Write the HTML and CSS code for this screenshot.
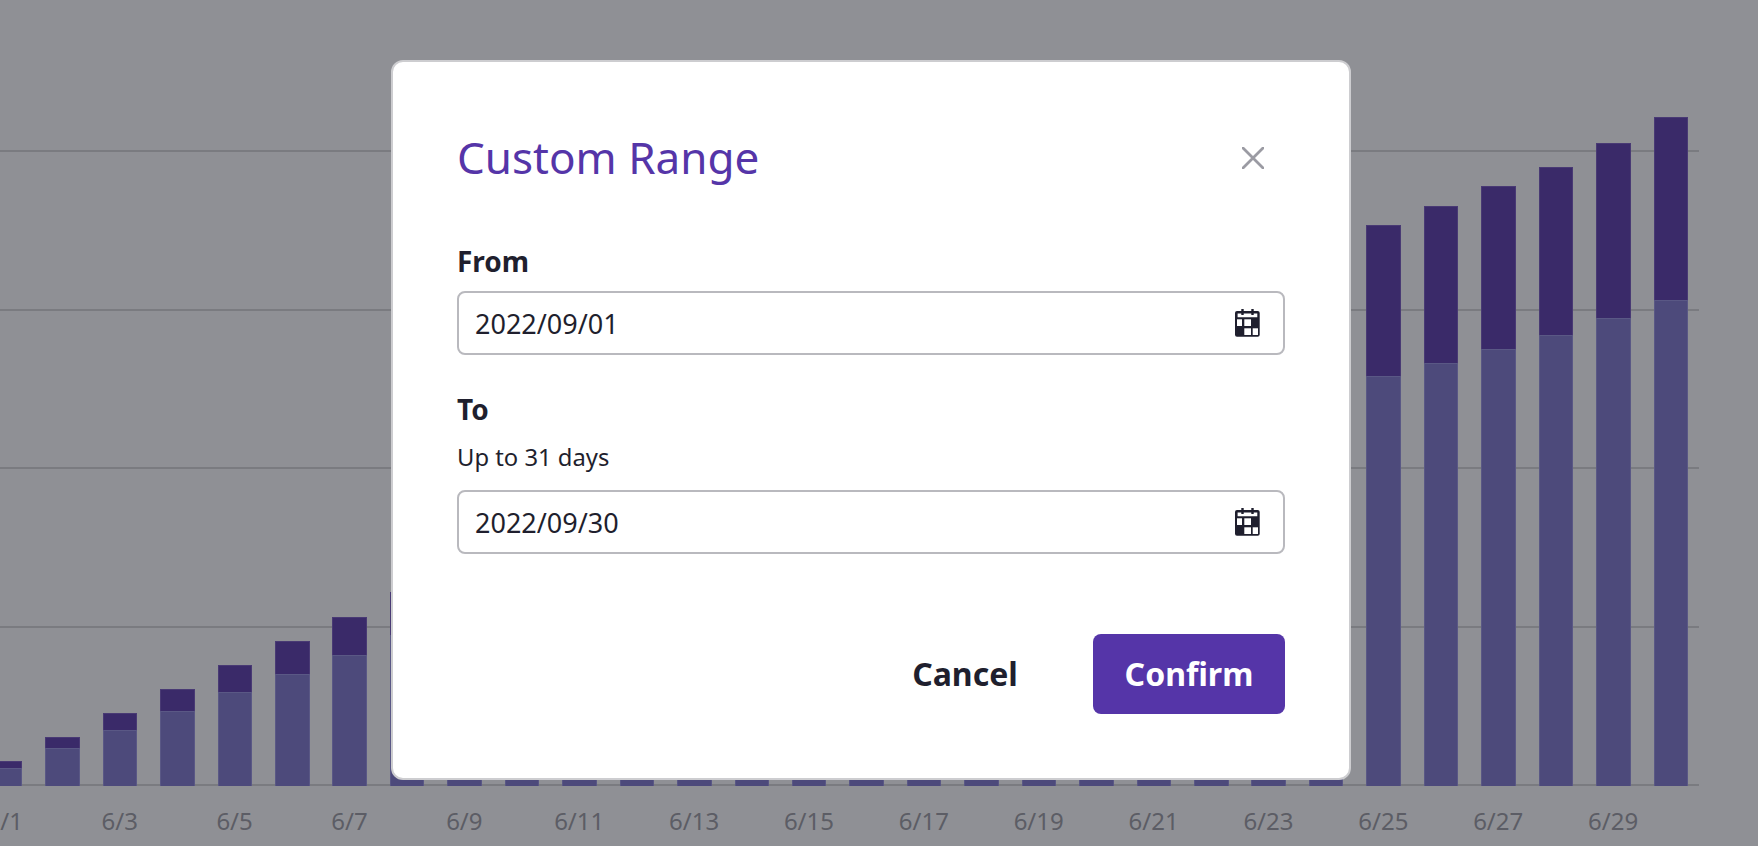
FILE: index.html
```html
<!DOCTYPE html>
<html>
<head>
    <title>Custom Range</title>
    <link rel="stylesheet" href="styles.css">
</head>
<body>
    <div class="chart">
        <div class="plot">
            <div class="grid">
                <div class="grid_line"></div>
                <div class="grid_line"></div>
                <div class="grid_line"></div>
                <div class="grid_line"></div>
                <div class="grid_line"></div>
            </div>
            <div class="bars">
                <div class="bar"><div class="bar_top" style="height:7px"></div><div class="bar_low" style="height:18px"></div></div>
                <div class="bar"><div class="bar_top" style="height:11px"></div><div class="bar_low" style="height:38px"></div></div>
                <div class="bar"><div class="bar_top" style="height:17px"></div><div class="bar_low" style="height:56px"></div></div>
                <div class="bar"><div class="bar_top" style="height:22px"></div><div class="bar_low" style="height:75px"></div></div>
                <div class="bar"><div class="bar_top" style="height:27px"></div><div class="bar_low" style="height:94px"></div></div>
                <div class="bar"><div class="bar_top" style="height:33px"></div><div class="bar_low" style="height:112px"></div></div>
                <div class="bar"><div class="bar_top" style="height:38px"></div><div class="bar_low" style="height:131px"></div></div>
                <div class="bar"><div class="bar_top" style="height:43px"></div><div class="bar_low" style="height:151px"></div></div>
                <div class="bar"><div class="bar_top" style="height:50px"></div><div class="bar_low" style="height:166px"></div></div>
                <div class="bar"><div class="bar_top" style="height:56px"></div><div class="bar_low" style="height:181px"></div></div>
                <div class="bar"><div class="bar_top" style="height:63px"></div><div class="bar_low" style="height:196px"></div></div>
                <div class="bar"><div class="bar_top" style="height:69px"></div><div class="bar_low" style="height:211px"></div></div>
                <div class="bar"><div class="bar_top" style="height:76px"></div><div class="bar_low" style="height:226px"></div></div>
                <div class="bar"><div class="bar_top" style="height:82px"></div><div class="bar_low" style="height:242px"></div></div>
                <div class="bar"><div class="bar_top" style="height:89px"></div><div class="bar_low" style="height:257px"></div></div>
                <div class="bar"><div class="bar_top" style="height:95px"></div><div class="bar_low" style="height:272px"></div></div>
                <div class="bar"><div class="bar_top" style="height:102px"></div><div class="bar_low" style="height:287px"></div></div>
                <div class="bar"><div class="bar_top" style="height:108px"></div><div class="bar_low" style="height:303px"></div></div>
                <div class="bar"><div class="bar_top" style="height:115px"></div><div class="bar_low" style="height:318px"></div></div>
                <div class="bar"><div class="bar_top" style="height:121px"></div><div class="bar_low" style="height:333px"></div></div>
                <div class="bar"><div class="bar_top" style="height:128px"></div><div class="bar_low" style="height:348px"></div></div>
                <div class="bar"><div class="bar_top" style="height:134px"></div><div class="bar_low" style="height:364px"></div></div>
                <div class="bar"><div class="bar_top" style="height:141px"></div><div class="bar_low" style="height:379px"></div></div>
                <div class="bar"><div class="bar_top" style="height:145px"></div><div class="bar_low" style="height:394px"></div></div>
                <div class="bar"><div class="bar_top" style="height:151px"></div><div class="bar_low" style="height:410px"></div></div>
                <div class="bar"><div class="bar_top" style="height:157px"></div><div class="bar_low" style="height:423px"></div></div>
                <div class="bar"><div class="bar_top" style="height:163px"></div><div class="bar_low" style="height:437px"></div></div>
                <div class="bar"><div class="bar_top" style="height:168px"></div><div class="bar_low" style="height:451px"></div></div>
                <div class="bar"><div class="bar_top" style="height:175px"></div><div class="bar_low" style="height:468px"></div></div>
                <div class="bar"><div class="bar_top" style="height:183px"></div><div class="bar_low" style="height:486px"></div></div>
            </div>
        </div>
        <div class="labels">
            <span class="label">6/1</span>
            <span class="label">6/3</span>
            <span class="label">6/5</span>
            <span class="label">6/7</span>
            <span class="label">6/9</span>
            <span class="label">6/11</span>
            <span class="label">6/13</span>
            <span class="label">6/15</span>
            <span class="label">6/17</span>
            <span class="label">6/19</span>
            <span class="label">6/21</span>
            <span class="label">6/23</span>
            <span class="label">6/25</span>
            <span class="label">6/27</span>
            <span class="label">6/29</span>
        </div>
    </div>

    <div class="modal">
        <div class="modal_header">
            <h2 class="modal_title">Custom Range</h2>
            <svg class="close_icon" width="22" height="22" viewBox="0 0 22 22">
                <path d="M1 1L21 21M21 1L1 21" fill="none" stroke="#9b9ba3" stroke-width="2.8" stroke-linecap="round"/>
            </svg>
        </div>

        <div class="field field_from">
            <label class="field_label" for="input_from">From</label>
            <div class="date_box">
                <input id="input_from" class="date_input" type="text" value="2022/09/01">
                <svg class="calendar_icon" width="25" height="28" viewBox="0 0 25 28">
                    <rect x="0" y="2" width="24.7" height="25.8" rx="2" fill="#1f1f2e"/>
                    <rect x="6.3" y="0" width="2.4" height="5" fill="#1f1f2e"/>
                    <rect x="16.3" y="0" width="2.4" height="5" fill="#1f1f2e"/>
                    <path d="M2.6 4.5H6.3V6H8.7V4.5H16.3V6H18.7V4.5H22.3V8.3H2.6Z" fill="#fff"/>
                    <rect x="2" y="10.3" width="5" height="6.7" fill="#fff"/>
                    <rect x="9.3" y="10.3" width="6.7" height="6.7" fill="#fff"/>
                    <rect x="9.3" y="19.3" width="6.7" height="6.7" fill="#fff"/>
                    <rect x="17.7" y="19.3" width="5.3" height="6.7" fill="#fff"/>
                </svg>
            </div>
        </div>

        <div class="field field_to">
            <label class="field_label" for="input_to">To</label>
            <div class="field_hint">Up to 31 days</div>
            <div class="date_box">
                <input id="input_to" class="date_input" type="text" value="2022/09/30">
                <svg class="calendar_icon" width="25" height="28" viewBox="0 0 25 28">
                    <rect x="0" y="2" width="24.7" height="25.8" rx="2" fill="#1f1f2e"/>
                    <rect x="6.3" y="0" width="2.4" height="5" fill="#1f1f2e"/>
                    <rect x="16.3" y="0" width="2.4" height="5" fill="#1f1f2e"/>
                    <path d="M2.6 4.5H6.3V6H8.7V4.5H16.3V6H18.7V4.5H22.3V8.3H2.6Z" fill="#fff"/>
                    <rect x="2" y="10.3" width="5" height="6.7" fill="#fff"/>
                    <rect x="9.3" y="10.3" width="6.7" height="6.7" fill="#fff"/>
                    <rect x="9.3" y="19.3" width="6.7" height="6.7" fill="#fff"/>
                    <rect x="17.7" y="19.3" width="5.3" height="6.7" fill="#fff"/>
                </svg>
            </div>
        </div>

        <div class="modal_actions">
            <button class="btn btn_cancel" type="button">Cancel</button>
            <button class="btn btn_confirm" type="button">Confirm</button>
        </div>
    </div>
</body>
</html>
```

FILE: styles.css
```css
html, body {
	margin: 0;
	height: 100%;
}

body {
	position: relative;
	overflow: hidden;
	background-color: #8f9095;
	color: #1f1f2e;
	font-family: "Noto Sans", sans-serif;
}

/* chart behind the dialog */
.chart {
	padding-top: 150px;
	width: 1699px;
}

.plot {
	position: relative;
	height: 636px;
}

.grid {
	display: flex;
	flex-direction: column;
	justify-content: space-between;
	height: 100%;
}

.grid_line {
	height: 2px;
	background-color: #7a7b80;
}

.bars {
	position: absolute;
	left: -12.2px;
	bottom: 0;
	display: flex;
	align-items: flex-end;
	gap: 22.95px;
}

.bar {
	width: 34.5px;
	flex: none;
}

.bar_top, .bar_low {
	box-sizing: border-box;
	border: 1px solid rgba(255, 255, 255, 0.08);
	border-bottom: none;
}

.bar_top {
	background-color: #3a2a69;
}

.bar_low {
	background-color: #4d4a7b;
}

.labels {
	display: flex;
	gap: 57.45px;
	margin-left: -23.9px;
	padding-top: 17px;
}

.label {
	flex: none;
	width: 57.45px;
	text-align: center;
	font-size: 24px;
	line-height: 36px;
	color: #5c5d65;
}

/* dialog */
.modal {
	position: absolute;
	left: 391px;
	top: 60px;
	box-sizing: border-box;
	width: 960px;
	height: 720px;
	padding: 68px 64px 0;
	background-color: #ffffff;
	border: 2px solid #cdcdd0;
	border-radius: 12px;
}

.modal_header {
	display: flex;
	align-items: center;
	justify-content: space-between;
	height: 56px;
}

.modal_title {
	margin: 0 0 2px;
	font-size: 44px;
	line-height: 56px;
	font-weight: 400;
	color: #5535a8;
}

.close_icon {
	margin-right: 21px;
}

.field_from {
	margin-top: 57px;
}

.field_to {
	margin-top: 36px;
}

.field_label {
	display: block;
	font-size: 28px;
	line-height: 36px;
	font-weight: 700;
}

.field_hint {
	margin-top: 14px;
	font-size: 23.8px;
	line-height: 32px;
}

.date_box {
	display: flex;
	align-items: center;
	box-sizing: border-box;
	height: 64px;
	margin-top: 12px;
	padding: 0 23px 0 16px;
	border: 2px solid #b9b9be;
	border-radius: 8px;
}

.field_hint + .date_box {
	margin-top: 17px;
}

.date_input {
	flex: 1;
	min-width: 0;
	padding: 0;
	border: none;
	outline: none;
	background: none;
	color: #1f1f2e;
	font-family: "Noto Sans", sans-serif;
	font-size: 27px;
}

.calendar_icon {
	flex: none;
}

.modal_actions {
	display: flex;
	justify-content: flex-end;
	align-items: center;
	gap: 44px;
	margin-top: 80px;
}

.btn {
	height: 80px;
	padding: 0 0 2px;
	border: none;
	border-radius: 8px;
	background: none;
	font-family: "Noto Sans", sans-serif;
	font-size: 32px;
	font-weight: 700;
}

.btn_cancel {
	width: 168px;
	color: #1f1f2e;
}

.btn_confirm {
	width: 192px;
	background-color: #5535a8;
	color: #ffffff;
}
```
